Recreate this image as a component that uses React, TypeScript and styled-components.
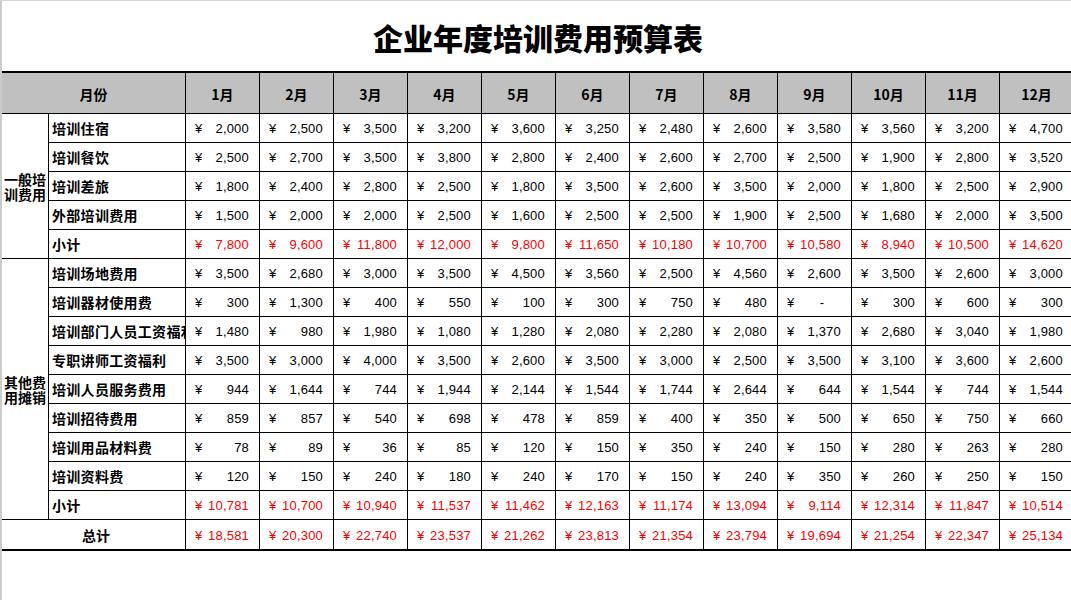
import React from 'react';
import styled, { createGlobalStyle } from 'styled-components';

const GlobalStyle = createGlobalStyle`
  html, body {
    margin: 0;
    padding: 0;
    background: #ffffff;
    overflow: hidden;
  }
  body {
    font-family: "Noto Sans CJK SC", "Liberation Sans", sans-serif;
    color: #000000;
  }
`;

type Money = number | null;

interface BudgetRow {
  name: string;
  values: Money[];
  subtotal?: boolean;
}

interface BudgetGroup {
  label: string;
  rows: BudgetRow[];
}

const months = ['1月', '2月', '3月', '4月', '5月', '6月', '7月', '8月', '9月', '10月', '11月', '12月'];

const groups: BudgetGroup[] = [
  {
    label: '一般培训费用',
    rows: [
      { name: '培训住宿', values: [2000, 2500, 3500, 3200, 3600, 3250, 2480, 2600, 3580, 3560, 3200, 4700] },
      { name: '培训餐饮', values: [2500, 2700, 3500, 3800, 2800, 2400, 2600, 2700, 2500, 1900, 2800, 3520] },
      { name: '培训差旅', values: [1800, 2400, 2800, 2500, 1800, 3500, 2600, 3500, 2000, 1800, 2500, 2900] },
      { name: '外部培训费用', values: [1500, 2000, 2000, 2500, 1600, 2500, 2500, 1900, 2500, 1680, 2000, 3500] },
      {
        name: '小计',
        subtotal: true,
        values: [7800, 9600, 11800, 12000, 9800, 11650, 10180, 10700, 10580, 8940, 10500, 14620]
      }
    ]
  },
  {
    label: '其他费用摊销',
    rows: [
      { name: '培训场地费用', values: [3500, 2680, 3000, 3500, 4500, 3560, 2500, 4560, 2600, 3500, 2600, 3000] },
      { name: '培训器材使用费', values: [300, 1300, 400, 550, 100, 300, 750, 480, null, 300, 600, 300] },
      { name: '培训部门人员工资福利', values: [1480, 980, 1980, 1080, 1280, 2080, 2280, 2080, 1370, 2680, 3040, 1980] },
      { name: '专职讲师工资福利', values: [3500, 3000, 4000, 3500, 2600, 3500, 3000, 2500, 3500, 3100, 3600, 2600] },
      { name: '培训人员服务费用', values: [944, 1644, 744, 1944, 2144, 1544, 1744, 2644, 644, 1544, 744, 1544] },
      { name: '培训招待费用', values: [859, 857, 540, 698, 478, 859, 400, 350, 500, 650, 750, 660] },
      { name: '培训用品材料费', values: [78, 89, 36, 85, 120, 150, 350, 240, 150, 280, 263, 280] },
      { name: '培训资料费', values: [120, 150, 240, 180, 240, 170, 150, 240, 350, 260, 250, 150] },
      {
        name: '小计',
        subtotal: true,
        values: [10781, 10700, 10940, 11537, 11462, 12163, 11174, 13094, 9114, 12314, 11847, 10514]
      }
    ]
  }
];

const totals = [18581, 20300, 22740, 23537, 21262, 23813, 21354, 23794, 19694, 21254, 22347, 25134];

const formatMoney = (v: number) => v.toLocaleString('en-US');

function App() {
  return (
    <>
      <GlobalStyle />
      <Sheet>
        <TitleBar>
          <Title>企业年度培训费用预算表</Title>
        </TitleBar>
        <BudgetGrid>
          <HeaderCell $span={2}>月份</HeaderCell>
          {months.map((m) => (
            <HeaderCell key={m}>{m}</HeaderCell>
          ))}

          {groups.map((group) => (
            <React.Fragment key={group.label}>
              <CategoryCell $rows={group.rows.length}>
                <CategoryText>{group.label}</CategoryText>
              </CategoryCell>
              {group.rows.map((row) => (
                <React.Fragment key={group.label + row.name}>
                  <ItemCell title={row.name}>{row.name}</ItemCell>
                  {row.values.map((v, i) => (
                    <MoneyCell key={i} $red={!!row.subtotal}>
                      <Yen>¥</Yen>
                      {v === null ? <Dash>-</Dash> : <Amount>{formatMoney(v)}</Amount>}
                    </MoneyCell>
                  ))}
                </React.Fragment>
              ))}
            </React.Fragment>
          ))}

          <TotalLabel>总计</TotalLabel>
          {totals.map((v, i) => (
            <MoneyCell key={i} $red $last>
              <Yen>¥</Yen>
              <Amount>{formatMoney(v)}</Amount>
            </MoneyCell>
          ))}
        </BudgetGrid>
      </Sheet>
    </>
  );
}

const Sheet = styled.div`
  width: 1071px;
  height: 600px;
  box-sizing: border-box;
  border-top: 1px solid #d4d4d4;
  border-left: 2px solid #cccccc;
  overflow: hidden;
  background: #ffffff;
`;

const TitleBar = styled.div`
  width: 1072px;
  height: 70px;
  display: flex;
  align-items: center;
  justify-content: center;
`;

const Title = styled.h1`
  margin: 0;
  padding-top: 2px;
  font-family: "Noto Sans CJK SC", sans-serif;
  font-weight: 900;
  font-size: 30px;
  line-height: 30px;
`;

const BudgetGrid = styled.div`
  display: grid;
  width: 1072px;
  grid-template-columns: 47px 137px repeat(12, 74px);
  grid-template-rows: 41px repeat(15, 29px);
  border-top: 2px solid #000000;
  border-bottom: 2px solid #000000;
`;

const Cell = styled.div`
  box-sizing: border-box;
  border-right: 1px solid #000000;
  border-bottom: 1px solid #000000;
  display: flex;
  align-items: center;
  overflow: hidden;
  white-space: nowrap;
`;

const HeaderCell = styled(Cell)<{ $span?: number }>`
  grid-column: span ${(p) => p.$span ?? 1};
  background: #c0c0c0;
  justify-content: center;
  font-weight: 700;
  font-size: 14px;
  padding-top: 1px;
`;

const CategoryCell = styled(Cell)<{ $rows: number }>`
  grid-column: 1;
  grid-row: span ${(p) => p.$rows};
  justify-content: center;
  padding-top: 1px;
`;

const CategoryText = styled.div`
  width: 42px;
  white-space: normal;
  word-break: break-all;
  text-align: center;
  font-weight: 700;
  font-size: 14px;
  line-height: 15px;
`;

const ItemCell = styled(Cell)`
  grid-column: 2;
  padding-left: 3px;
  font-weight: 700;
  font-size: 14px;
  letter-spacing: 0.3px;
`;

const TotalLabel = styled(Cell)`
  grid-column: 1 / span 2;
  border-bottom: none;
  justify-content: center;
  font-weight: 700;
  font-size: 14px;
  padding-left: 5px;
`;

const MoneyCell = styled(Cell)<{ $red?: boolean; $last?: boolean }>`
  justify-content: space-between;
  padding: 1px 10px 0 9px;
  color: ${(p) => (p.$red ? '#ff0000' : '#000000')};
  border-bottom: ${(p) => (p.$last ? 'none' : '1px solid #000000')};
  font-family: "Liberation Sans", "Noto Sans CJK SC", sans-serif;
  font-size: 13px;
`;

const Yen = styled.span`
  display: inline-block;
  width: 8px;
`;

const Amount = styled.span`
  font-variant-numeric: tabular-nums;
  letter-spacing: 0.2px;
`;

const Dash = styled.span`
  padding-right: 17px;
`;

export default App;
